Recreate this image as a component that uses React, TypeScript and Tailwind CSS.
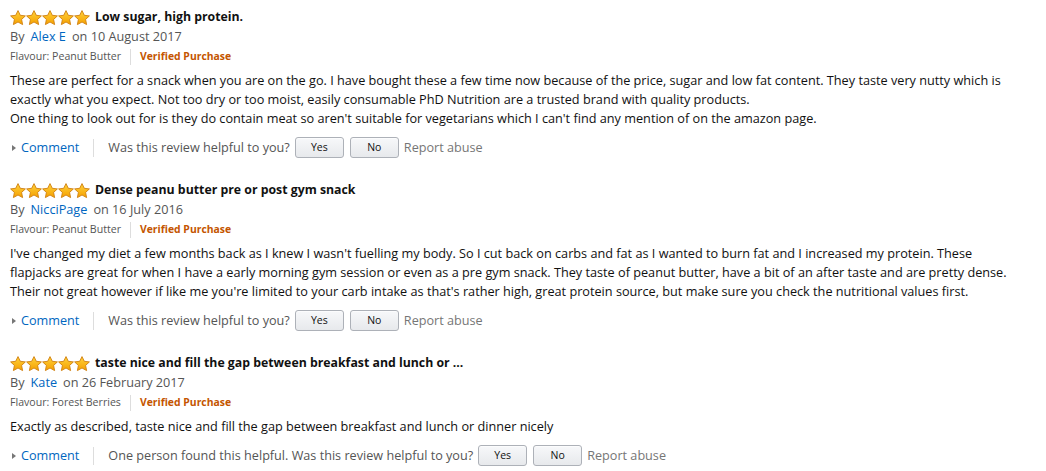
import React from "react";

const FONT = { fontFamily: '"Open Sans", "Noto Sans", Arial, sans-serif' };

function Star() {
  return (
    <svg width="16" height="16" viewBox="0 0 16 16" className="block">
      <defs>
        <linearGradient id="sg" x1="0" y1="0" x2="0" y2="1">
          <stop offset="0" stopColor="#ffd23c" />
          <stop offset="1" stopColor="#f5a000" />
        </linearGradient>
      </defs>
      <path
        d="M8 0.6 L10.3 5.3 L15.4 5.9 L11.6 9.4 L12.6 14.6 L8 12 L3.4 14.6 L4.4 9.4 L0.6 5.9 L5.7 5.3 Z"
        fill="url(#sg)"
        stroke="#cf7f10"
        strokeWidth="0.9"
        strokeLinejoin="round"
      />
    </svg>
  );
}

function Stars() {
  return (
    <div className="flex">
      {[0, 1, 2, 3, 4].map((i) => (
        <Star key={i} />
      ))}
    </div>
  );
}

function Btn({ label }: { label: string }) {
  return (
    <div className="flex h-[21px] w-[49px] items-center justify-center rounded-[3px] border border-[#adb1b8] bg-gradient-to-b from-[#f7f8fa] to-[#e7e9ec] text-[10.5px] text-[#111] shadow-[0_1px_0_rgba(255,255,255,0.6)_inset]">
      {label}
    </div>
  );
}

type Review = {
  title: string;
  author: string;
  date: string;
  flavour: string;
  lines: string[];
  prefix?: string;
};

const reviews: Review[] = [
  {
    title: "Low sugar, high protein.",
    author: "Alex E",
    date: "10 August 2017",
    flavour: "Peanut Butter",
    lines: [
      "These are perfect for a snack when you are on the go. I have bought these a few time now because of the price, sugar and low fat content. They taste very nutty which is",
      "exactly what you expect. Not too dry or too moist, easily consumable PhD Nutrition are a trusted brand with quality products.",
      "One thing to look out for is they do contain meat so aren't suitable for vegetarians which I can't find any mention of on the amazon page.",
    ],
  },
  {
    title: "Dense peanu butter pre or post gym snack",
    author: "NicciPage",
    date: "16 July 2016",
    flavour: "Peanut Butter",
    lines: [
      "I've changed my diet a few months back as I knew I wasn't fuelling my body. So I cut back on carbs and fat as I wanted to burn fat and I increased my protein. These",
      "flapjacks are great for when I have a early morning gym session or even as a pre gym snack. They taste of peanut butter, have a bit of an after taste and are pretty dense.",
      "Their not great however if like me you're limited to your carb intake as that's rather high, great protein source, but make sure you check the nutritional values first.",
    ],
  },
  {
    title: "taste nice and fill the gap between breakfast and lunch or ...",
    author: "Kate",
    date: "26 February 2017",
    flavour: "Forest Berries",
    lines: ["Exactly as described, taste nice and fill the gap between breakfast and lunch or dinner nicely"],
    prefix: "One person found this helpful. ",
  },
];

function ReviewBlock({ r }: { r: Review }) {
  return (
    <div className="flex flex-col">
      <div className="flex h-[19px] items-center">
        <Stars />
        <span className="ml-[5px] text-[12.3px] font-bold text-[#111]">{r.title}</span>
      </div>
      <div className="flex h-[20px] items-center text-[12.7px] text-[#555]">
        <span>By</span>
        <span className="ml-[6px] text-[#0066c0]">{r.author}</span>
        <span className="ml-[6px]">on {r.date}</span>
      </div>
      <div className="flex h-[19px] items-center">
        <span className="text-[10.6px] text-[#555]">Flavour: {r.flavour}</span>
        <span className="mx-[9px] h-[16px] w-px bg-[#ddd]" />
        <span className="text-[10.4px] font-bold text-[#c45500]">Verified Purchase</span>
      </div>
      <div className="mt-[5px] flex flex-col text-[12.7px] leading-[19px] text-[#111]">
        {r.lines.map((l, i) => (
          <div key={i} className="whitespace-nowrap">
            {l}
          </div>
        ))}
      </div>
      <div className="mt-[9px] flex h-[21px] items-center text-[12.65px]">
        <span className="ml-[2px] mr-[5px] h-0 w-0 border-y-[3.5px] border-l-[4px] border-y-transparent border-l-[#777]" />
        <span className="text-[#0066c0]">Comment</span>
        <span className="mx-[14px] h-[18px] w-px bg-[#ddd]" />
        <span className="text-[#555]">
          {r.prefix}Was this review helpful to you?
        </span>
        <div className="ml-[5px] flex gap-[6px]">
          <Btn label="Yes" />
          <Btn label="No" />
        </div>
        <span className="ml-[5px] text-[#767676]">Report abuse</span>
      </div>
    </div>
  );
}

export default function App() {
  return (
    <div className="h-[471px] w-[1046px] overflow-hidden bg-white pl-[10px] pt-[8px]" style={FONT}>
      <div className="flex flex-col gap-[23px]">
        {reviews.map((r, i) => (
          <ReviewBlock key={i} r={r} />
        ))}
      </div>
    </div>
  );
}
